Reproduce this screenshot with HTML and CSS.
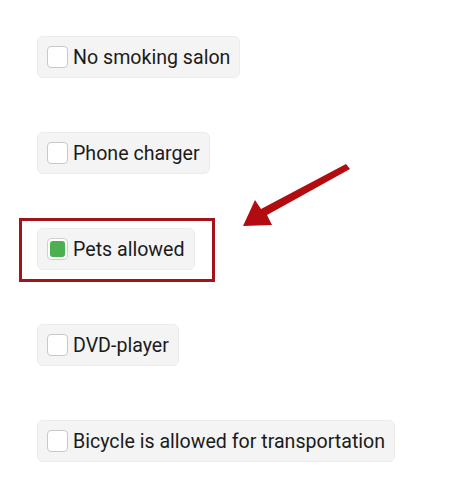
FILE: index.html
```html
<!DOCTYPE html>
<html>
<head>
<meta charset="utf-8">
<link rel="stylesheet" href="styles.css">
</head>
<body>
<div class="list">
  <label class="item"><span class="box"></span><span class="label">No smoking salon</span></label>
  <label class="item"><span class="box"></span><span class="label">Phone charger</span></label>
  <div class="highlight">
    <label class="item"><span class="box checked"></span><span class="label">Pets allowed</span></label>
  </div>
  <label class="item"><span class="box"></span><span class="label">DVD-player</span></label>
  <label class="item"><span class="box"></span><span class="label">Bicycle is allowed for transportation</span></label>
</div>
<svg class="arrow" width="120" height="75" viewBox="0 0 120 75">
  <polygon points="113,7 117,12 34,58 39,68 10,69 22,43 28,52" fill="#b30c10"/>
</svg>
</body>
</html>
```
FILE: styles.css
```css
html, body {
  margin: 0;
  padding: 0;
  background: #ffffff;
}
body {
  position: relative;
  width: 470px;
  height: 485px;
  overflow: hidden;
  font-family: Roboto, "Liberation Sans", sans-serif;
}
.list {
  display: flex;
  flex-direction: column;
  align-items: flex-start;
  gap: 54px;
  padding: 36px 0 0 37px;
}
.item {
  display: flex;
  align-items: center;
  gap: 5px;
  height: 42px;
  box-sizing: border-box;
  padding: 0 9px 0 9px;
  background: #f4f4f4;
  border: 1px solid #ececec;
  border-radius: 6px;
  font-size: 19.6px;
  color: #1b1b1b;
}
.box {
  width: 21px;
  height: 22px;
  box-sizing: border-box;
  border: 1px solid #c9c9c9;
  border-radius: 4px;
  background: #ffffff;
  flex: none;
}
.box.checked {
  border-color: #d0d0d0;
  position: relative;
}
.box.checked::before {
  content: "";
  position: absolute;
  inset: 2px;
  background: #4caf50;
  border-radius: 3px;
}
.highlight {
  position: relative;
}
.highlight::after {
  content: "";
  position: absolute;
  top: -10px;
  left: -18px;
  right: -20px;
  bottom: -12px;
  border: 3px solid #a0141a;
}
.arrow {
  position: absolute;
  left: 233px;
  top: 157px;
}
```
